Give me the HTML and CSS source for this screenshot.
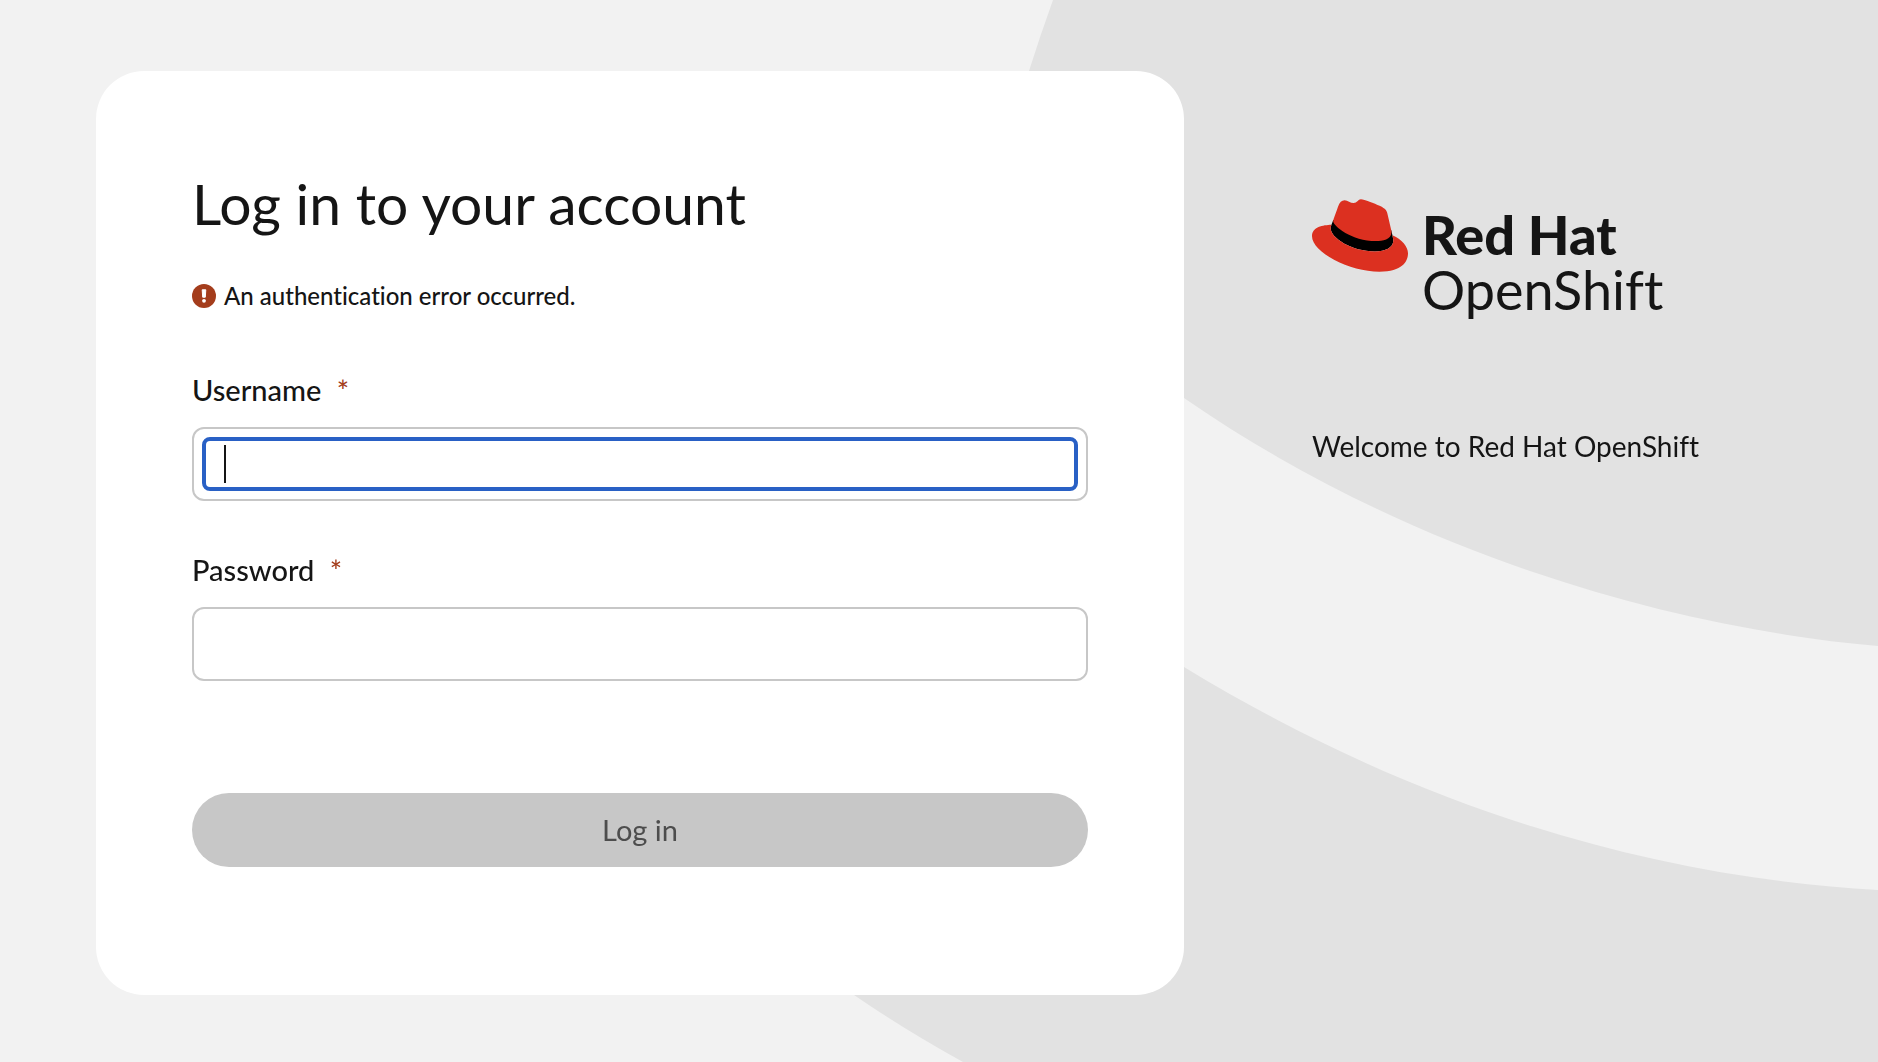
FILE: index.html
```html
<!DOCTYPE html>
<html lang="en">
<head>
    <meta charset="UTF-8">
    <meta name="viewport" content="width=device-width, initial-scale=1.0">
    <title>Log in - Red Hat OpenShift</title>
    <link rel="stylesheet" href="styles.css">
</head>
<body>
    <svg class="background" viewBox="0 0 1878 1062" preserveAspectRatio="xMidYMid slice" aria-hidden="true">
        <path d="M1053 0Q1040 36 1029 71C1000 160 1040 290 1184 398C1395 544 1650 626 1878 646V0Z"/>
        <path d="M854 995Q905 1030 963 1062H1878V890C1630 876 1395 796 1184 667L1000 560Z"/>
    </svg>

    <div class="login">
        <main class="login-card">
            <h1>Log in to your account</h1>
            <form id="loginForm">
                <p class="error-message">
                    <svg class="error-icon" viewBox="0 0 24 24" aria-hidden="true">
                        <circle cx="12" cy="12" r="12" fill="#a43d1c"/>
                        <path d="M10.2 5.8h3.6l-.5 7.4h-2.6z" fill="#fff" stroke="#fff" stroke-linejoin="round"/>
                        <circle cx="12" cy="16.8" r="1.9" fill="#fff"/>
                    </svg>
                    An authentication error occurred.
                </p>

                <div class="form-group">
                    <label for="username">Username <span class="required">*</span></label>
                    <div class="form-control">
                        <input class="focused" type="text" id="username" name="username" autofocus>
                    </div>
                </div>

                <div class="form-group">
                    <label for="password">Password <span class="required">*</span></label>
                    <div class="form-control">
                        <input type="password" id="password" name="password">
                    </div>
                </div>

                <button type="submit" disabled>Log in</button>
            </form>
        </main>

        <aside class="login-side">
            <div class="brand">
                <svg class="brand-hat" viewBox="0 2.9 24 18.2" aria-hidden="true">
                    <!-- band, brim, crown -->
                    <path fill="#000" d="M20.11 11.951c.218 1.032.218 1.14.218 1.277 0 1.765-1.984 2.745-4.593 2.745-5.895.004-11.06-3.451-11.06-5.734a2.326 2.326 0 0 1 .19-.925L5.32 8.1l14.5 2.6z"/>
                    <path fill="#dc3020" d="M20.11 11.951c.218 1.032.218 1.14.218 1.277 0 1.765-1.984 2.745-4.593 2.745-5.895.004-11.06-3.451-11.06-5.734a2.326 2.326 0 0 1 .19-.925C2.746 9.415 0 9.794 0 12.217c0 3.969 9.405 8.861 16.851 8.861 5.71 0 7.149-2.582 7.149-4.62 0-1.605-1.387-3.425-3.887-4.512"/>
                    <path fill="#dc3020" d="M16.009 13.386c1.577 0 3.86-.326 3.86-2.202a1.765 1.765 0 0 0-.04-.431l-.94-4.08c-.216-.898-.406-1.305-1.982-2.093-1.223-.625-3.888-1.658-4.676-1.658-.733 0-.947.946-1.822.946-.842 0-1.467-.706-2.255-.706-.757 0-1.25.515-1.63 1.576 0 0-1.06 2.99-1.197 3.424a.81.81 0 0 0-.028.245c0 1.162 4.577 4.974 10.71 4.974"/>
                </svg>
                <div class="brand-name">
                    <strong>Red Hat</strong>
                    <span>OpenShift</span>
                </div>
            </div>
            <p>Welcome to Red Hat OpenShift</p>
        </aside>
    </div>
</body>
</html>
```
FILE: styles.css
```css
* {
    box-sizing: border-box;
}

body {
    margin: 0;
    background-color: #f2f2f2;
    color: #151515;
    font-family: Lato, sans-serif;
    font-size: 28px;
    font-variant-ligatures: none;
    line-height: 42px;
}

h1, p {
    margin: 0;
}

/* Curved shapes behind everything */
.background {
    position: fixed;
    top: 0;
    left: 0;
    width: 100%;
    height: 100%;
    z-index: -1;
    fill: #e2e2e2;
}

.login {
    display: grid;
    grid-template-columns: minmax(0, 1088px) minmax(0, 1fr);
    column-gap: 128px;
    align-content: center;
    align-items: start;
    min-height: 100vh;
    padding: 36px 96px 32px;
}

.login-card {
    padding: 96px 96px 128px;
    background-color: #fff;
    border-radius: 48px;
}

h1 {
    margin-bottom: 39px;
    font-size: 57px;
    font-weight: 400;
    line-height: 72px;
}

.error-message {
    display: flex;
    align-items: center;
    gap: 8px;
    margin-bottom: 55px;
    font-size: 24px;
    font-weight: 500;
    line-height: 36px;
}

.error-icon {
    width: 24px;
    height: 24px;
}

.form-group {
    margin-bottom: 48px;
}

label {
    display: block;
    margin-bottom: 16px;
    font-size: 29px;
    font-weight: 500;
}

.required {
    margin-left: 8px;
    color: #a43d1c;
}

.form-control {
    height: 74px;
    padding: 12px;
    border: 2px solid #c7c7c7;
    border-radius: 12px;
}

input {
    display: block;
    width: 100%;
    height: 100%;
    padding: 0 18px;
    border: none;
    border-radius: 4px;
    background: none;
    color: inherit;
    font: inherit;
    outline: none;
}

/* Focus ring with the text caret */
.focused {
    outline: 4px solid #2960c5;
    caret-color: transparent;
    background: linear-gradient(#151515, #151515) 18px center / 2px 38px no-repeat;
}

button {
    width: 100%;
    height: 74px;
    margin-top: 64px;
    border: none;
    border-radius: 37px;
    background-color: #c7c7c7;
    color: #4d4d4d;
    font: inherit;
    font-size: 29px;
}

.login-side {
    padding-top: 128px;
}

.brand {
    display: flex;
    gap: 14px;
    margin-bottom: 108px;
}

.brand-hat {
    width: 96px;
    height: 73px;
}

.brand-name {
    display: flex;
    flex-direction: column;
    padding-top: 8px;
    font-size: 54px;
    line-height: 55px;
}

.brand-name strong {
    font-weight: 900;
}

@media (max-width: 1200px) {
    .login {
        grid-template-columns: minmax(0, 1fr);
        row-gap: 32px;
    }

    .login-side {
        padding-top: 0;
    }
}
```
